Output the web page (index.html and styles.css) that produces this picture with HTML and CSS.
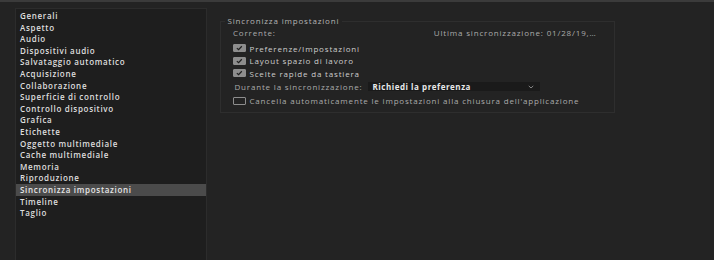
FILE: index.html
```html
<!DOCTYPE html>
<html lang="it">
<head>
<meta charset="utf-8">
<title>Preferenze</title>
<link rel="stylesheet" href="styles.css">
</head>
<body>
<div class="window">
  <nav class="sidebar">
    <div class="item">Generali</div>
    <div class="item">Aspetto</div>
    <div class="item">Audio</div>
    <div class="item">Dispositivi audio</div>
    <div class="item">Salvataggio automatico</div>
    <div class="item">Acquisizione</div>
    <div class="item">Collaborazione</div>
    <div class="item">Superficie di controllo</div>
    <div class="item">Controllo dispositivo</div>
    <div class="item">Grafica</div>
    <div class="item">Etichette</div>
    <div class="item">Oggetto multimediale</div>
    <div class="item">Cache multimediale</div>
    <div class="item">Memoria</div>
    <div class="item">Riproduzione</div>
    <div class="item selected">Sincronizza impostazioni</div>
    <div class="item">Timeline</div>
    <div class="item">Taglio</div>
  </nav>
  <main class="content">
    <fieldset class="group">
      <legend class="legend">Sincronizza impostazioni</legend>
      <div class="body">
        <div class="row status">
          <span class="muted">Corrente:</span>
          <span class="muted">Ultima sincronizzazione: 01/28/19,…</span>
        </div>
        <label class="row check"><span class="box checked"><svg viewBox="0 0 12 8" class="tick"><path d="M2.8 4.1 L5.1 6.3 L9.4 1.7" /></svg></span><span class="label">Preferenze/Impostazioni</span></label>
        <label class="row check"><span class="box checked"><svg viewBox="0 0 12 8" class="tick"><path d="M2.8 4.1 L5.1 6.3 L9.4 1.7" /></svg></span><span class="label">Layout spazio di lavoro</span></label>
        <label class="row check"><span class="box checked"><svg viewBox="0 0 12 8" class="tick"><path d="M2.8 4.1 L5.1 6.3 L9.4 1.7" /></svg></span><span class="label">Scelte rapide da tastiera</span></label>
        <div class="row sync">
          <span class="muted sync-label">Durante la sincronizzazione:</span>
          <div class="select"><span class="select-text">Richiedi la preferenza</span><svg class="chev" viewBox="0 0 8 5"><path d="M1 1 L4 3.8 L7 1" /></svg></div>
        </div>
        <label class="row check last-row"><span class="box"></span><span class="muted">Cancella automaticamente le impostazioni alla chiusura dell'applicazione</span></label>
      </div>
    </fieldset>
  </main>
</div>
</body>
</html>
```
FILE: styles.css
```css
html, body {
  margin: 0;
  padding: 0;
  height: 100%;
}
body {
  background: #232323;
  border-top: 2px solid #3b3b3b;
  box-sizing: border-box;
  font-family: "Open Sans", "DejaVu Sans", sans-serif;
  font-size: 8px;
  overflow: hidden;
}
.window {
  display: flex;
  height: 100%;
  padding: 6px 0 0 15px;
  box-sizing: border-box;
}
.sidebar {
  width: 192px;
  flex: none;
  background: #1e1e1e;
  border: 1px solid #2c2c2c;
  border-bottom: none;
  box-sizing: border-box;
  padding-top: 1px;
}
.item {
  height: 11.6px;
  line-height: 11.6px;
  padding-left: 4px;
  color: #dedede;
  font-weight: 600;
  white-space: nowrap;
  letter-spacing: 0.68px;
}
.item.selected {
  background: #4b4b4b;
  color: #e6e6e6;
}
.content {
  padding: 8px 0 0 12.5px;
}
.group {
  width: 395px;
  margin: 0;
  padding: 0;
  border: 1px solid #2e2e2e;
  box-sizing: border-box;
  min-width: 0;
}
.legend {
  padding: 0 3px;
  margin-left: 4px;
  line-height: 10px;
  color: #b4b4b4;
  letter-spacing: 0.83px;
}
.body {
  padding: 0 17px 5px 12.5px;
}
.row {
  display: flex;
  align-items: center;
  white-space: nowrap;
}
.status {
  height: 12px;
  margin-top: 0;
  justify-content: space-between;
}
.muted {
  color: #ababab;
  letter-spacing: 0.82px;
}
.check {
  height: 12.5px;
}
.status + .check {
  margin-top: 4.2px;
}
.box {
  width: 12.5px;
  height: 8px;
  box-sizing: border-box;
  border: 1px solid #8d8d8d;
  border-radius: 1px;
  margin-right: 4px;
  flex: none;
  display: flex;
}
.box.checked {
  background: #8d8d8d;
}
.tick {
  width: 100%;
  height: 100%;
}
.tick path {
  fill: none;
  stroke: #1e1e1e;
  stroke-width: 1.6;
}
.label {
  color: #cdcdcd;
  letter-spacing: 0.82px;
}
.sync {
  height: 11px;
  margin-top: 1.5px;
  padding-left: 1.5px;
}
.sync-label {
  width: 133px;
}
.select {
  width: 172px;
  height: 9.3px;
  background: #1a1a1a;
  display: flex;
  align-items: center;
  justify-content: space-between;
  padding: 0 6px 0 5px;
  box-sizing: border-box;
}
.select-text {
  color: #e8e8e8;
  font-weight: 700;
  letter-spacing: 0.53px;
}
.chev {
  width: 6px;
  height: 4px;
}
.chev path {
  fill: none;
  stroke: #9a9a9a;
  stroke-width: 1.1;
}
.last-row {
  height: 12px;
  margin-top: 2.7px;
}
```
